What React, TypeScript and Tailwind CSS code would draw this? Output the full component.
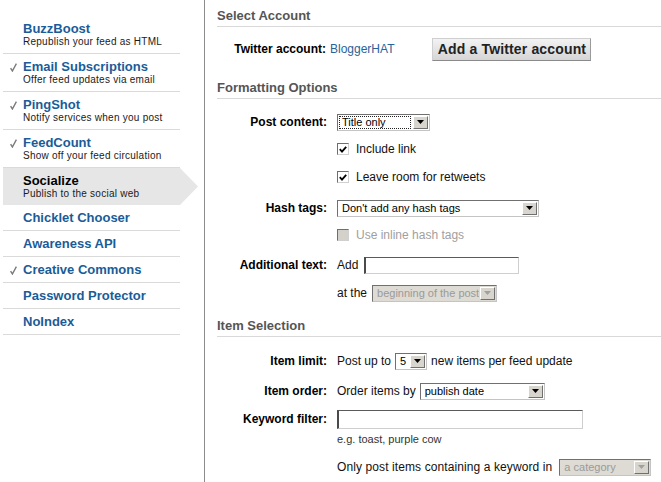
import clsx from "clsx";
import type { ReactNode } from "react";

interface NavItem {
  title: string;
  sub?: string;
  checked?: boolean;
  active?: boolean;
}

const navItems: NavItem[] = [
  { title: "BuzzBoost", sub: "Republish your feed as HTML" },
  { title: "Email Subscriptions", sub: "Offer feed updates via email", checked: true },
  { title: "PingShot", sub: "Notify services when you post", checked: true },
  { title: "FeedCount", sub: "Show off your feed circulation", checked: true },
  { title: "Socialize", sub: "Publish to the social web", active: true },
  { title: "Chicklet Chooser" },
  { title: "Awareness API" },
  { title: "Creative Commons", checked: true },
  { title: "Password Protector" },
  { title: "NoIndex" },
];

const Check = () => (
  <svg width="7" height="9" viewBox="0 0 7 9" className="mt-[3px]">
    <path d="M0.6 5.2 L2.4 8 L6.4 0.6" fill="none" stroke="#7a7a7a" strokeWidth="1.4" />
  </svg>
);

const SideNav = () => (
  <div className="w-[205px] shrink-0 border-r border-[#8c8c8c] pt-[16px]">
    {navItems.map((item) => (
      <div
        key={item.title}
        className={clsx(
          "ml-[3px] flex pt-[6px]",
          item.active
            ? "w-[195px] bg-[#e6e6e6] pb-[6px] [clip-path:polygon(0_0,177px_0,100%_50%,177px_100%,0_100%)]"
            : "w-[177px] border-b border-[#dadada]",
          !item.active && (item.sub ? "pb-[6px]" : "pb-[5px]")
        )}
      >
        <div className="w-[20px] shrink-0 pl-[7px]">{item.checked && <Check />}</div>
        <div>
          <div
            className={clsx(
              "text-[13px] font-bold leading-[14px]",
              item.active ? "text-black" : "text-[#1a5c98]"
            )}
          >
            {item.title}
          </div>
          {item.sub && (
            <div className="text-[10px] leading-[11px] tracking-[0.25px] text-[#1a1a1a]">{item.sub}</div>
          )}
        </div>
      </div>
    ))}
  </div>
);

const Heading = ({ children, className }: { children: ReactNode; className: string }) => (
  <div
    className={clsx(
      "border-b border-[#d9d9d9] pb-[2px] text-[13px] font-bold leading-[16px] text-[#555]",
      className
    )}
  >
    {children}
  </div>
);

const Row = ({ label, h, children }: { label?: string; h: string; children: ReactNode }) => (
  <div className={clsx("flex items-center", h)}>
    <div className="w-[110px] shrink-0 text-right text-[12px] font-bold text-black">{label}</div>
    <div className="ml-[10px] flex items-center gap-[4px] text-[12px] text-[#111]">{children}</div>
  </div>
);

const Select = ({
  w,
  value,
  disabled,
  focus,
}: {
  w: string;
  value: string;
  disabled?: boolean;
  focus?: boolean;
}) => (
  <div
    className={clsx(
      "flex h-[17px] border border-t-[#707070] border-l-[#707070] border-b-[#c4c4c4] border-r-[#c4c4c4]",
      disabled ? "bg-[#dedbd4]" : "bg-white",
      w
    )}
  >
    <div
      className={clsx(
        "flex min-w-0 flex-1 items-center overflow-hidden whitespace-nowrap text-[11px] leading-none",
        disabled ? "text-[#9a9a9a]" : "text-black"
      )}
    >
      {focus ? (
        <span className="m-px flex h-[13px] flex-1 items-center border border-dotted border-[#222] pl-[2px]">
          {value}
        </span>
      ) : (
        <span className="pl-[4px]">{value}</span>
      )}
    </div>
    <div className="m-px flex w-[15px] shrink-0 items-center justify-center border border-t-white border-l-white border-b-[#707070] border-r-[#707070] bg-[#d8d5ce]">
      <svg width="7" height="4" viewBox="0 0 7 4">
        <path d="M0 0h7L3.5 4z" fill={disabled ? "#a0a0a0" : "#000"} />
      </svg>
    </div>
  </div>
);

const TextInput = ({ w, h }: { w: string; h: string }) => (
  <div
    className={clsx(
      "border border-l-2 border-t-[#5a5a5a] border-l-[#4a4a4a] border-b-[#cfcfcf] border-r-[#cfcfcf] bg-white",
      w,
      h
    )}
  />
);

const Checkbox = ({ checked, disabled }: { checked?: boolean; disabled?: boolean }) => (
  <div
    className={clsx(
      "flex h-[12px] w-[12px] items-center justify-center border border-t-[#6e6e6e] border-l-[#6e6e6e] border-b-[#d0d0d0] border-r-[#d0d0d0]",
      disabled ? "bg-[#d4d1ca]" : "bg-white"
    )}
  >
    {checked && (
      <svg width="8" height="7" viewBox="0 0 8 7">
        <path d="M0.8 3.2 L3 5.6 L7.2 0.8" fill="none" stroke="#000" strokeWidth="1.8" />
      </svg>
    )}
  </div>
);

export default function App() {
  return (
    <div className="flex h-[482px] w-[661px] overflow-hidden bg-white font-['Liberation_Sans',Arial,sans-serif]">
      <SideNav />

      <div className="flex-1 pl-[12px]">
        <Heading className="pt-[8px]">Select Account</Heading>

        <div className="mt-[10px] flex h-[24px] items-center">
          <div className="w-[109px] shrink-0 text-right text-[12px] font-bold text-black">
            Twitter account:
          </div>
          <span className="ml-[4px] text-[12px] text-[#2a629a]">BloggerHAT</span>
          <button className="ml-[38px] h-[23px] w-[159px] border border-t-[#cfcfcf] border-l-[#cfcfcf] border-b-[#8a8a8a] border-r-[#9a9a9a] bg-gradient-to-b from-[#f3f3f3] to-[#d5d5d5] text-[14px] font-bold tracking-[0.15px] text-[#222]">
            Add a Twitter account
          </button>
        </div>

        <Heading className="pt-[19px]">Formatting Options</Heading>

        <div className="mt-[9px]">
          <Row label="Post content:" h="h-[28px]">
            <Select w="w-[93px]" value="Title only" focus />
          </Row>
          <Row h="h-[26px]">
            <Checkbox checked />
            <span className="ml-[3px]">Include link</span>
          </Row>
          <Row h="h-[30px]">
            <Checkbox checked />
            <span className="ml-[3px]">Leave room for retweets</span>
          </Row>
          <Row label="Hash tags:" h="h-[32px]">
            <Select w="w-[202px]" value="Don't add any hash tags" />
          </Row>
          <Row h="h-[22px]">
            <Checkbox disabled />
            <span className="ml-[3px] text-[#a0a0a0]">Use inline hash tags</span>
          </Row>
          <Row label="Additional text:" h="h-[38px]">
            <span>Add</span>
            <div className="ml-[2px]">
              <TextInput w="w-[155px]" h="h-[17px]" />
            </div>
          </Row>
          <Row h="h-[18px]">
            <span>at the</span>
            <div className="ml-[1px]">
              <Select w="w-[125px]" value="beginning of the post" disabled />
            </div>
          </Row>
        </div>

        <Heading className="pt-[16px]">Item Selection</Heading>

        <div className="mt-[10px]">
          <Row label="Item limit:" h="h-[28px]">
            <span>Post up to</span>
            <Select w="w-[32px]" value="5" />
            <span>new items per feed update</span>
          </Row>
          <Row label="Item order:" h="h-[32px]">
            <span>Order items by</span>
            <Select w="w-[125px]" value="publish date" />
          </Row>
          <Row label="Keyword filter:" h="h-[24px]">
            <TextInput w="w-[246px]" h="h-[19px]" />
          </Row>
          <Row h="h-[16px]">
            <span className="text-[11px] text-[#333]">e.g. toast, purple cow</span>
          </Row>
          <Row h="h-[40px]">
            <span className="mr-[3px] tracking-[0.1px]">Only post items containing a keyword in</span>
            <Select w="w-[92px]" value="a category" disabled />
          </Row>
        </div>
      </div>
    </div>
  );
}
